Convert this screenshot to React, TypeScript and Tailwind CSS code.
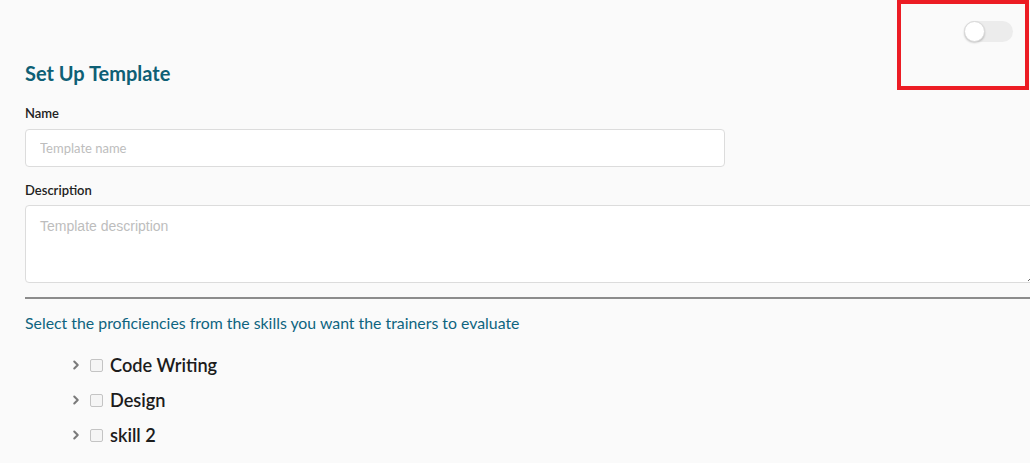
import { ChevronRight } from "lucide-react";

const skills = ["Code Writing", "Design", "skill 2"];

export default function App() {
  return (
    <div
      className="relative w-[1030px] h-[463px] overflow-hidden bg-[#fafafa]"
      style={{ fontFamily: "Lato, 'Open Sans', sans-serif" }}
    >
      <div className="absolute left-[897px] top-0 w-[132px] h-[90px] border-4 border-[#ec1c24] pointer-events-none" />

      <div className="flex justify-end pt-[21px] pr-[17px]">
        <button className="relative w-[49px] h-[21px] rounded-full bg-[#ececec]">
          <span className="absolute left-0 top-0 w-[21px] h-[21px] rounded-full bg-white border border-[#d9d9d9] shadow-[0_1px_2px_rgba(0,0,0,0.2)]" />
        </button>
      </div>

      <div className="pl-[25px]">
        <h1 className="mt-[19px] text-[20px] leading-[24px] font-bold text-[#0e5f75]">Set Up Template</h1>

        <label className="block mt-[20px] text-[13px] leading-[16px] font-semibold text-[#222]">Name</label>
        <input
          placeholder="Template name"
          className="mt-[8px] block w-[700px] h-[38px] px-[14px] bg-white border border-[#dcdcdc] rounded-[4px] text-[13px] placeholder:text-[#bdbdbd] outline-none"
          style={{ fontFamily: "Lato, sans-serif" }}
        />

        <label className="block mt-[15px] text-[13px] leading-[16px] font-semibold text-[#222]">Description</label>
        <textarea
          placeholder="Template description"
          className="mt-[7px] block w-[1012px] h-[78px] px-[14px] py-[10px] bg-white border border-[#dcdcdc] rounded-[4px] text-[14px] placeholder:text-[#bdbdbd] outline-none"
          style={{ fontFamily: "'Liberation Sans', Arial, sans-serif" }}
        />

        <div className="mt-[14px] h-[2px] bg-[#8c8c8c]" />

        <p className="mt-[14px] text-[15.85px] leading-[20px] text-[#0e6480]">
          Select the proficiencies from the skills you want the trainers to evaluate
        </p>

        <ul className="mt-[21px] pl-[44px] flex flex-col gap-[13px]">
          {skills.map((s) => (
            <li key={s} className="flex items-center h-[22px]">
              <ChevronRight className="w-[14px] h-[14px] text-[#7a7a7a]" strokeWidth={3.5} />
              <span className="ml-[7px] w-[13px] h-[13px] rounded-[2px] border border-[#c4c4c4] bg-[#f5f5f5]" />
              <span className="ml-[7px] text-[18.2px] leading-[22px] font-semibold text-[#1c1c1c]">{s}</span>
            </li>
          ))}
        </ul>
      </div>
    </div>
  );
}
